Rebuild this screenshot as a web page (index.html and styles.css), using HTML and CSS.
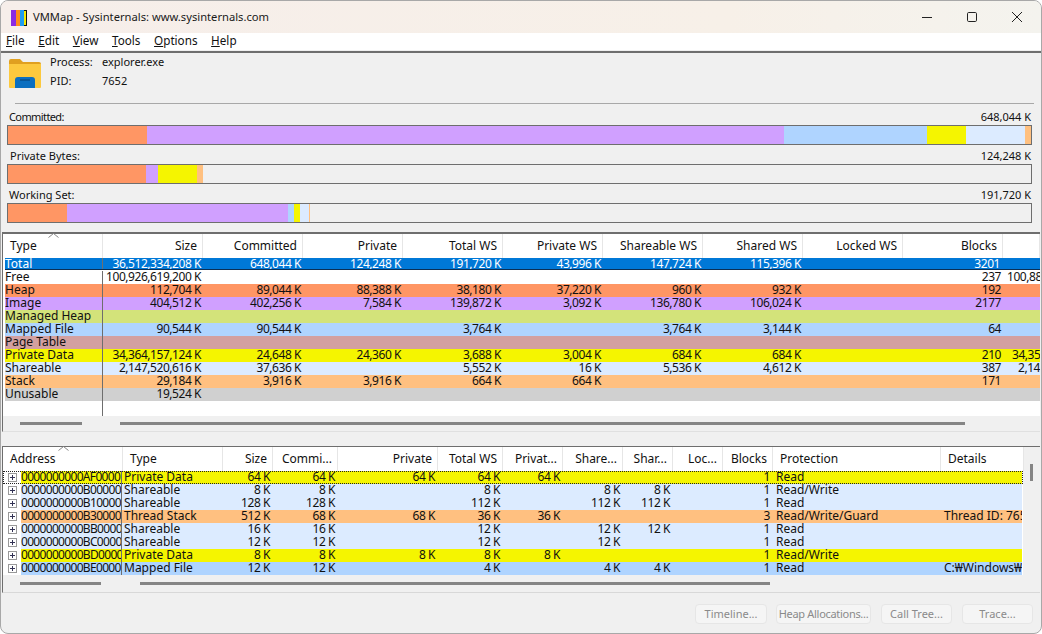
FILE: index.html
```html
<!DOCTYPE html>
<html lang="en">
<head>
<meta charset="utf-8">
<title>VMMap - Sysinternals: www.sysinternals.com</title>
<link rel="stylesheet" href="styles.css">
</head>
<body>
<div class="window">
  <header class="titlebar">
    <svg class="logo" width="16" height="16" viewBox="0 0 16 16"><rect width="16" height="16" fill="#111"/><rect x="0" y="0" width="5" height="16" fill="#8a2be2"/><rect x="5" y="0" width="4" height="16" fill="#ff8c1a"/><rect x="9" y="0" width="4" height="16" fill="#1e9bf0"/><rect x="13" y="1" width="2" height="14" fill="#f5e800"/></svg>
    <span class="title">VMMap - Sysinternals: www.sysinternals.com</span>
    <div class="controls">
      <svg width="12" height="12" viewBox="0 0 12 12"><path d="M1 6.5h10" stroke="#222" fill="none"/></svg>
      <svg width="12" height="12" viewBox="0 0 12 12"><rect x="1.5" y="1.5" width="9" height="9" rx="1.2" stroke="#222" fill="none"/></svg>
      <svg width="12" height="12" viewBox="0 0 12 12"><path d="M1 1l10 10M11 1L1 11" stroke="#222" fill="none"/></svg>
    </div>
  </header>
  <nav class="menubar">
    <span class="menu"><u>F</u>ile</span><span class="menu"><u>E</u>dit</span><span class="menu"><u>V</u>iew</span><span class="menu"><u>T</u>ools</span><span class="menu"><u>O</u>ptions</span><span class="menu"><u>H</u>elp</span>
  </nav>
  <section class="summary">
    <div class="process">
      <svg class="folder" width="32" height="30" viewBox="0 0 32 30"><path d="M0 2a2 2 0 0 1 2-2h9l3 3h16a2 2 0 0 1 2 2v3H0z" fill="#e0a020"/><path d="M0 5h32v23a1 1 0 0 1-1 1H1a1 1 0 0 1-1-1z" fill="#fcc93e"/><path d="M6 21a3 3 0 0 1 3-3h14a3 3 0 0 1 3 3v8H6z" fill="#0b6fc0"/><path d="M11 21h10" stroke="#063f70"/></svg>
      <div class="proc-grid">
        <span>Process:</span><span>explorer.exe</span>
        <span>PID:</span><span>7652</span>
      </div>
    </div>
    <hr class="rule">
    <div class="gauge gauge-first">
      <div class="gauge-label"><span class="tight">Committed:</span><span>648,044 K</span></div>
      <div class="bar">
        <i class="heap" style="width:139px"></i><i class="image" style="width:637px"></i><i class="mapped" style="width:143px"></i><i class="private" style="width:39px"></i><i class="shareable" style="width:59px"></i><i class="stack" style="width:6px"></i>
      </div>
    </div>
    <div class="gauge">
      <div class="gauge-label"><span class="nudge">Private Bytes:</span><span>124,248 K</span></div>
      <div class="bar">
        <i class="heap" style="width:138px"></i><i class="image" style="width:12px"></i><i class="private" style="width:39px"></i><i class="stack" style="width:6px"></i>
      </div>
    </div>
    <div class="gauge">
      <div class="gauge-label"><span>Working Set:</span><span>191,720 K</span></div>
      <div class="bar">
        <i class="heap" style="width:59px"></i><i class="image" style="width:221px"></i><i class="mapped" style="width:6px"></i><i class="private" style="width:6px"></i><i class="shareable" style="width:9px"></i><i class="stack" style="width:1px"></i>
      </div>
    </div>
  </section>

  <section class="panel types">
    <svg class="caret caret-a" width="11" height="5" viewBox="0 0 11 5"><path d="M.5 4.5l5-4 5 4" stroke="#888" fill="none"/></svg>
    <div class="tbl-head cols-a">
      <span class="l">Type</span><span>Size</span><span>Committed</span><span>Private</span><span>Total WS</span><span>Private WS</span><span>Shareable WS</span><span>Shared WS</span><span>Locked WS</span><span>Blocks</span><span></span>
    </div>
    <div class="tbl-body">
      <div class="row cols-a selected"><span class="l">Total</span><span>36,512,334,208 K</span><span>648,044 K</span><span>124,248 K</span><span>191,720 K</span><span>43,996 K</span><span>147,724 K</span><span>115,396 K</span><span></span><span class="blk">3201</span><span></span></div>
      <div class="row cols-a"><span class="l">Free</span><span>100,926,619,200 K</span><span></span><span></span><span></span><span></span><span></span><span></span><span></span><span>237</span><span class="lg lg-a">100,88</span></div>
      <div class="row cols-a heap"><span class="l">Heap</span><span>112,704 K</span><span>89,044 K</span><span>88,388 K</span><span>38,180 K</span><span>37,220 K</span><span>960 K</span><span>932 K</span><span></span><span>192</span><span></span></div>
      <div class="row cols-a image"><span class="l">Image</span><span>404,512 K</span><span>402,256 K</span><span>7,584 K</span><span>139,872 K</span><span>3,092 K</span><span>136,780 K</span><span>106,024 K</span><span></span><span>2177</span><span></span></div>
      <div class="row cols-a managed"><span class="l">Managed Heap</span><span></span><span></span><span></span><span></span><span></span><span></span><span></span><span></span><span></span><span></span></div>
      <div class="row cols-a mapped"><span class="l">Mapped File</span><span>90,544 K</span><span>90,544 K</span><span></span><span>3,764 K</span><span></span><span>3,764 K</span><span>3,144 K</span><span></span><span>64</span><span></span></div>
      <div class="row cols-a pagetable"><span class="l">Page Table</span><span></span><span></span><span></span><span></span><span></span><span></span><span></span><span></span><span></span><span></span></div>
      <div class="row cols-a private"><span class="l">Private Data</span><span>34,364,157,124 K</span><span>24,648 K</span><span>24,360 K</span><span>3,688 K</span><span>3,004 K</span><span>684 K</span><span>684 K</span><span></span><span>210</span><span class="lg lg-b">34,35</span></div>
      <div class="row cols-a shareable"><span class="l">Shareable</span><span>2,147,520,616 K</span><span>37,636 K</span><span></span><span>5,552 K</span><span>16 K</span><span>5,536 K</span><span>4,612 K</span><span></span><span>387</span><span class="lg lg-c">2,14</span></div>
      <div class="row cols-a stack"><span class="l">Stack</span><span>29,184 K</span><span>3,916 K</span><span>3,916 K</span><span>664 K</span><span>664 K</span><span></span><span></span><span></span><span>171</span><span></span></div>
      <div class="row cols-a unusable"><span class="l">Unusable</span><span>19,524 K</span><span></span><span></span><span></span><span></span><span></span><span></span><span></span><span></span><span></span></div>
      <div class="filler"></div>
    </div>
    <div class="hscroll"><i class="t1"></i><i class="t2"></i></div>
  </section>

  <div class="splitter"></div>

  <section class="panel regions">
    <svg class="caret caret-b" width="11" height="5" viewBox="0 0 11 5"><path d="M.5 4.5l5-4 5 4" stroke="#888" fill="none"/></svg>
    <div class="tbl-wrap">
      <div class="tbl-main">
        <div class="tbl-head cols-b">
          <span class="l">Address</span><span class="l">Type</span><span>Size</span><span>Commi...</span><span>Private</span><span>Total WS</span><span>Privat...</span><span>Share...</span><span>Shar...</span><span>Loc...</span><span>Blocks</span><span class="l">Protection</span><span class="l">Details</span>
        </div>
        <div class="row2 focus"><svg class="tree" width="9" height="9" viewBox="0 0 9 9"><rect x=".5" y=".5" width="8" height="8" fill="#fff" stroke="#999"/><path d="M2 4.5h5M4.5 2v5" stroke="#335"/></svg><div class="row cols-b2 private"><span class="addr">0000000000AF0000</span><span class="l">Private Data</span><span>64 K</span><span>64 K</span><span>64 K</span><span>64 K</span><span>64 K</span><span></span><span></span><span></span><span>1</span><span class="l prot">Read</span><span class="l"></span></div></div>
        <div class="row2"><svg class="tree" width="9" height="9" viewBox="0 0 9 9"><rect x=".5" y=".5" width="8" height="8" fill="#fff" stroke="#999"/><path d="M2 4.5h5M4.5 2v5" stroke="#335"/></svg><div class="row cols-b2 shareable"><span class="addr">0000000000B00000</span><span class="l">Shareable</span><span>8 K</span><span>8 K</span><span></span><span>8 K</span><span></span><span>8 K</span><span>8 K</span><span></span><span>1</span><span class="l prot">Read/Write</span><span class="l"></span></div></div>
        <div class="row2"><svg class="tree" width="9" height="9" viewBox="0 0 9 9"><rect x=".5" y=".5" width="8" height="8" fill="#fff" stroke="#999"/><path d="M2 4.5h5M4.5 2v5" stroke="#335"/></svg><div class="row cols-b2 shareable"><span class="addr">0000000000B10000</span><span class="l">Shareable</span><span>128 K</span><span>128 K</span><span></span><span>112 K</span><span></span><span>112 K</span><span>112 K</span><span></span><span>1</span><span class="l prot">Read</span><span class="l"></span></div></div>
        <div class="row2"><svg class="tree" width="9" height="9" viewBox="0 0 9 9"><rect x=".5" y=".5" width="8" height="8" fill="#fff" stroke="#999"/><path d="M2 4.5h5M4.5 2v5" stroke="#335"/></svg><div class="row cols-b2 stack"><span class="addr">0000000000B30000</span><span class="l">Thread Stack</span><span>512 K</span><span>68 K</span><span>68 K</span><span>36 K</span><span>36 K</span><span></span><span></span><span></span><span>3</span><span class="l prot">Read/Write/Guard</span><span class="l prot">Thread ID: 765</span></div></div>
        <div class="row2"><svg class="tree" width="9" height="9" viewBox="0 0 9 9"><rect x=".5" y=".5" width="8" height="8" fill="#fff" stroke="#999"/><path d="M2 4.5h5M4.5 2v5" stroke="#335"/></svg><div class="row cols-b2 shareable"><span class="addr">0000000000BB0000</span><span class="l">Shareable</span><span>16 K</span><span>16 K</span><span></span><span>12 K</span><span></span><span>12 K</span><span>12 K</span><span></span><span>1</span><span class="l prot">Read</span><span class="l"></span></div></div>
        <div class="row2"><svg class="tree" width="9" height="9" viewBox="0 0 9 9"><rect x=".5" y=".5" width="8" height="8" fill="#fff" stroke="#999"/><path d="M2 4.5h5M4.5 2v5" stroke="#335"/></svg><div class="row cols-b2 shareable"><span class="addr">0000000000BC0000</span><span class="l">Shareable</span><span>12 K</span><span>12 K</span><span></span><span>12 K</span><span></span><span>12 K</span><span></span><span></span><span>1</span><span class="l prot">Read</span><span class="l"></span></div></div>
        <div class="row2"><svg class="tree" width="9" height="9" viewBox="0 0 9 9"><rect x=".5" y=".5" width="8" height="8" fill="#fff" stroke="#999"/><path d="M2 4.5h5M4.5 2v5" stroke="#335"/></svg><div class="row cols-b2 private"><span class="addr">0000000000BD0000</span><span class="l">Private Data</span><span>8 K</span><span>8 K</span><span>8 K</span><span>8 K</span><span>8 K</span><span></span><span></span><span></span><span>1</span><span class="l prot">Read/Write</span><span class="l"></span></div></div>
        <div class="row2"><svg class="tree" width="9" height="9" viewBox="0 0 9 9"><rect x=".5" y=".5" width="8" height="8" fill="#fff" stroke="#999"/><path d="M2 4.5h5M4.5 2v5" stroke="#335"/></svg><div class="row cols-b2 mapped"><span class="addr">0000000000BE0000</span><span class="l">Mapped File</span><span>12 K</span><span>12 K</span><span></span><span>4 K</span><span></span><span>4 K</span><span>4 K</span><span></span><span>1</span><span class="l prot">Read</span><span class="l prot">C:₩Windows₩</span></div></div>
      </div>
      <div class="vscroll"><i></i></div>
    </div>
    <div class="hscroll hscroll-b"><i class="t3"></i><i class="t4"></i></div>
  </section>

  <footer class="actions">
    <button class="btn b-timeline">Timeline...</button>
    <button class="btn b-heap">Heap Allocations...</button>
    <button class="btn b-call">Call Tree...</button>
    <button class="btn b-trace">Trace...</button>
  </footer>
</div>
</body>
</html>
```
FILE: styles.css
```css
* { box-sizing: border-box; }
html, body { margin: 0; padding: 0; background: #fff; }
body { width: 1042px; height: 634px; overflow: hidden; font-family: "Noto Sans", "Liberation Sans", sans-serif; font-size: 12px; color: #111; }
.window { width: 1042px; height: 634px; display: flex; flex-direction: column; background: #f0f0f0; border: 1px solid #a8a8a8; border-radius: 8px; overflow: hidden; }

.titlebar { height: 32px; flex: none; display: flex; align-items: center; padding-left: 10px; background: linear-gradient(90deg, #f6eeea, #f7f0e8 70%, #f4f3ee); }
.logo { margin-right: 6px; margin-top: 1px; }
.title { font-size: 11.2px; color: #1a1a1a; margin-top: -1px; }
.controls { margin-left: auto; display: flex; gap: 33px; padding-right: 18px; }

.menubar { height: 17px; flex: none; background: #fff; display: flex; padding-left: 5px; gap: 13.6px; line-height: 15px; }
.menu { font-size: 11.7px; }

.summary { height: 181px; flex: none; border-top: 2px solid #6e6e6e; margin-top: 1px; padding: 0 8px 0 6px; display: flex; flex-direction: column; }
.process { height: 50px; flex: none; display: flex; padding: 5px 0 0 2px; }
.folder { margin-top: 1px; }
.proc-grid { margin: -4px 0 0 9px; display: grid; grid-template-columns: 52px auto; grid-auto-rows: 19px; align-content: start; line-height: 16px; font-size: 11px; }
.rule { margin: 0 -1px 0 8px; border: 0; border-top: 1px solid #a8a8a8; height: 1px; flex: none; }
.gauge { height: 39px; flex: none; }
.gauge-first { margin-top: 7px; }
.gauge-label { height: 14px; width: 1024px; display: flex; justify-content: space-between; font-size: 11px; line-height: 11px; padding: 0 0 0 2px; }
.tight { letter-spacing: -.6px; }
.nudge { margin-left: 1px; }
.bar { width: 1025px; height: 20px; border: 1px solid #6e6e6e; display: flex; background: #f0f0f0; }
.bar i { display: block; height: 100%; }
.heap { background: #ff9664; }
.image { background: #d0a0ff; }
.managed { background: #d3e37a; }
.mapped { background: #afd4ff; }
.pagetable { background: #d3a0a0; }
.private { background: #f5f500; }
.shareable { background: #dcebff; }
.stack { background: #ffc080; }
.unusable { background: #d0d0d0; }

.panel { position: relative; flex: none; margin: 0 1px; border-left: 1px solid #6e6e6e; border-top: 2px solid #6e6e6e; }
.types { height: 200px; border-bottom: 1px solid #e0e0e0; }
.regions { height: 147px; border-bottom: 1px solid #d8d8d8; border-top-width: 1px; }
.splitter { height: 14px; flex: none; }
.caret { position: absolute; }
.caret-a { left: 45px; top: -1px; }
.caret-b { left: 55px; top: -1px; }

.tbl-head { display: grid; height: 24px; background: #fff; font-size: 12px; line-height: 24px; }
.tbl-head span { text-align: right; padding-right: 5px; border-right: 1px solid #e6e6e6; overflow: hidden; white-space: nowrap; }
.tbl-head span.l { text-align: left; padding-left: 7px; }
.cols-a { grid-template-columns: 100px repeat(9, 100px) 37px; }
.cols-b { grid-template-columns: 120px 100px 50px 65px 100px 65px 60px 60px 50px 50px 50px 168px 83px; }
.cols-b2 { grid-template-columns: 101px 100px 50px 65px 100px 65px 60px 60px 50px 50px 50px 168px 82px; }

.tbl-body { height: 158px; background: #fff; padding-left: 2px; display: flex; flex-direction: column; }
.row { display: grid; height: 13px; flex: none; font-size: 12px; line-height: 12px; overflow: hidden; }
.row span { text-align: right; padding-right: 2px; white-space: nowrap; overflow: hidden; letter-spacing: -.45px; }
.row span.l { text-align: left; padding-left: 0; letter-spacing: 0; }
.row span.addr { text-align: left; padding: 0; letter-spacing: -.68px; }
.row.cols-a { grid-template-columns: 98px repeat(9, 100px) 37px; }
.row.cols-a > span:first-child { border-right: 1px solid #6e6e6e; }
.row.cols-b2 > span:first-child { border-right: 1px solid #6e6e6e; }
.row.cols-b2 > span.l:nth-child(2) { padding-left: 2px; }
.row span.l.prot { padding-left: 4px; }
.row.selected { background: #0078d7; color: #fff; height: 12px; margin-bottom: 1px; border-bottom: 1px solid #0b2f55; }
.row span.blk { padding-right: 3px; }
.row span.lg { text-align: left; padding: 0; }
.lg-a { margin-left: 4px; }
.lg-b { margin-left: 9px; }
.lg-c { margin-left: 15px; }
.filler { flex: 1; margin-left: 97px; border-left: 1px solid #6e6e6e; width: 1px; }

.hscroll { height: 15px; display: flex; align-items: center; padding-left: 17px; }
.hscroll i { display: block; height: 3px; background: #858585; }
.t1 { width: 62px; margin-right: 38px; }
.t2 { width: 845px; }
.hscroll-b { height: 17px; }
.t3 { width: 81px; margin-right: 39px; }
.t4 { width: 630px; }

.tbl-wrap { display: flex; }
.tbl-main { width: 1020px; flex: none; background: #fff; }
.row2 { display: flex; align-items: center; height: 13px; padding-left: 5px; background: #fff; }
.row2 .tree { flex: none; margin-right: 4px; }
.row2 .row { flex: none; }
.row2.focus { outline: 1px dotted #222; outline-offset: -1px; }
.vscroll { width: 17px; flex: none; }
.vscroll i { display: block; width: 3px; height: 17px; margin: 17px 0 0 7px; background: #858585; }

.actions { flex: 1; display: flex; padding: 11px 8px 0 0; justify-content: flex-end; align-items: flex-start; }
.btn { height: 20px; padding: 0 0 2px; font: 11px "Noto Sans", "Liberation Sans", sans-serif; color: #8a8a8a; background: #f5f5f5; border: 1px solid #e6e6e6; border-radius: 4px; margin-left: 10px; white-space: nowrap; overflow: hidden; }
.b-timeline { width: 72px; }
.b-heap { width: 95px; margin-left: 9px; letter-spacing: -.3px; }
.b-call { width: 71px; }
.b-trace { width: 71px; }
```
